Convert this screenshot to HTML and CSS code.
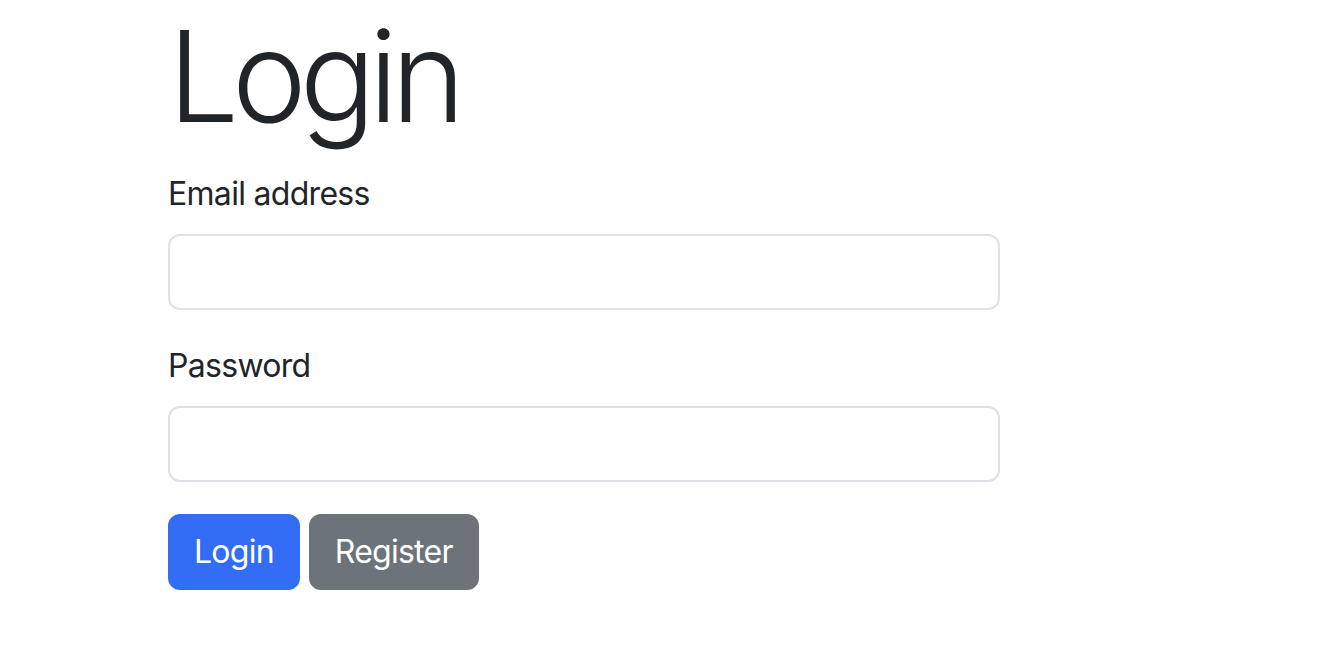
FILE: index.html
```html
<!DOCTYPE html>
<html lang="en">
<head>
<meta charset="utf-8">
<title>Login</title>
<link rel="stylesheet" href="styles.css">
</head>
<body>
<main class="container">
  <h1 class="title">Login</h1>
  <form class="form">
    <div class="field">
      <label class="label" for="email">Email address</label>
      <input class="input" id="email" type="email">
    </div>
    <div class="field">
      <label class="label" for="password">Password</label>
      <input class="input" id="password" type="password">
    </div>
    <div class="actions">
      <button class="btn btn-primary" type="submit">Login</button>
      <button class="btn btn-secondary" type="button">Register</button>
    </div>
  </form>
</main>
</body>
</html>
```

FILE: styles.css
```css
* { box-sizing: border-box; }
html, body { margin: 0; padding: 0; background: #fff; }
body {
  font-family: Inter, "Noto Sans", "Liberation Sans", sans-serif;
  color: #212529;
  font-size: 32px;
  line-height: 1.5;
  letter-spacing: -0.7px;
}
.container {
  padding-left: 168px;
  width: 1000px;
}
.title {
  margin: 0 0 16px;
  font-size: 126px;
  font-weight: 300;
  line-height: 153.6px;
  letter-spacing: -7px;
}
.form { display: flex; flex-direction: column; }
.field { display: flex; flex-direction: column; margin-bottom: 32px; }
.label {
  display: block;
  margin-bottom: 16px;
  font-size: 32px;
  line-height: 48px;
}
.input {
  display: block;
  width: 832px;
  height: 76px;
  border: 2px solid #dee2e6;
  border-radius: 12px;
  background: #fff;
  font: inherit;
  padding: 12px 24px;
  outline: none;
}
.actions { display: flex; gap: 9px; }
.btn {
  font: inherit;
  font-size: 32px;
  line-height: 48px;
  letter-spacing: -0.75px;
  padding: 12px 24px;
  border: 2px solid transparent;
  border-radius: 12px;
  color: #fff;
  cursor: pointer;
}
.btn-primary { background: #336cf5; border-color: #336cf5; }
.btn-secondary { background: #6c737b; border-color: #6c737b; }
```
